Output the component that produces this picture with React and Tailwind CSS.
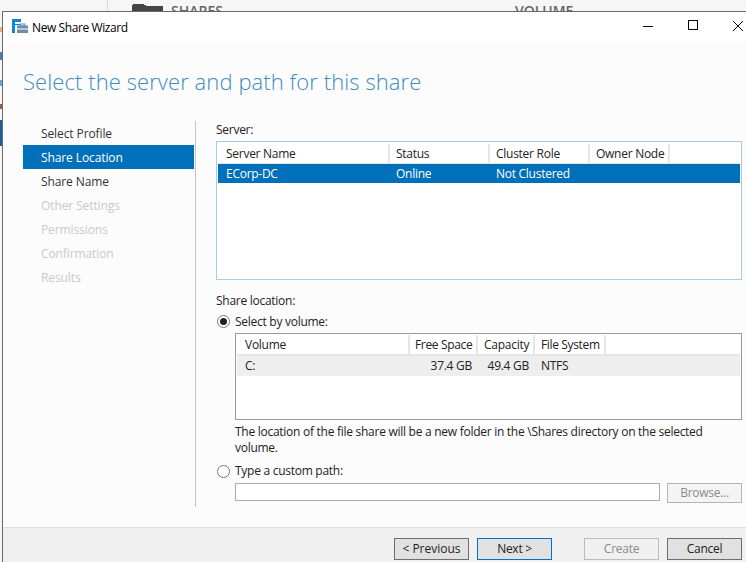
const FONT = "font-['Open_Sans','Noto_Sans',sans-serif]";

function Th({ w, children }) {
  return (
    <div className={`h-full shrink-0 border-r-2 border-[#e6e6e6] flex items-center pl-[8px] whitespace-nowrap ${w}`}>
      {children}
    </div>
  );
}

function NavItem({ children, state }) {
  const cls =
    state === "active"
      ? "bg-[#0070bb] text-white"
      : state === "off"
      ? "text-[#c9c9c9]"
      : "text-[#333333]";
  return <div className={`h-[24px] pl-[18px] pt-px flex items-center tracking-[-0.1px] ${cls}`}>{children}</div>;
}

function Radio({ checked }) {
  return (
    <span className="w-[13px] h-[13px] rounded-full border border-[#777777] bg-white flex items-center justify-center shrink-0">
      {checked && <span className="w-[7px] h-[7px] rounded-full bg-[#222222]" />}
    </span>
  );
}

function Btn({ extra = "", kind, children }) {
  const cls =
    kind === "default"
      ? "border-[#0070c8] bg-[#e1e1e1] text-[#222222]"
      : kind === "off"
      ? "border-[#bcbcbc] bg-[#f0f0f0] text-[#8a8a8a]"
      : "border-[#6e6e6e] bg-[#e1e1e1] text-[#222222]";
  return (
    <div className={`h-[22px] w-[75px] border flex items-center justify-center shrink-0 ${cls} ${extra}`}>{children}</div>
  );
}

export default function App() {
  return (
    <div className={`w-[746px] h-[562px] overflow-hidden bg-[#f6f6f6] text-[12px] leading-[16px] tracking-[-0.27px] text-[#222222] ${FONT}`}>
      <div className="h-[11px] overflow-hidden flex items-start">
        <div className="ml-[107px] w-px h-full bg-[#d8d8d8] shrink-0" />
        <svg className="ml-[24px] mt-[4px] shrink-0" width="32" height="7" viewBox="0 0 32 7">
          <rect x="0" y="1" width="14" height="6" fill="#444" />
          <rect x="1" y="0" width="11" height="2" fill="#444" />
          <rect x="14" y="2" width="17" height="5" fill="#444" />
        </svg>
        <span className="ml-[7px] mt-[3px] text-[14px] font-semibold text-[#666666] tracking-normal">SHARES</span>
        <span className="ml-[292px] mt-[3px] text-[14px] font-semibold text-[#666666] tracking-normal">VOLUME</span>
      </div>
      <div className="flex h-[551px]">
        <div className="w-[2px] shrink-0 flex flex-col">
          <div className="h-[16px] shrink-0" />
          <div className="h-[5px] bg-[#e8b080] shrink-0" />
          <div className="h-[20px] shrink-0" />
          <div className="h-[8px] bg-[#4a78b0] shrink-0" />
          <div className="h-[20px] shrink-0" />
          <div className="h-[6px] bg-[#7aa0d0] shrink-0" />
          <div className="h-[18px] shrink-0" />
          <div className="h-[5px] bg-[#a06040] shrink-0" />
          <div className="h-[11px] shrink-0" />
          <div className="h-[26px] bg-[#1c5e9c] shrink-0" />
        </div>
        <div className="h-full w-[760px] border-l border-t border-[#6b6b6b] bg-[#fcfcfc] flex flex-col shrink-0">
          <div className="h-[30px] bg-white flex items-center shrink-0 relative">
            <svg className="ml-[9px] shrink-0" width="16" height="16" viewBox="0 0 16 16">
              <rect x="0" y="0" width="9" height="3" fill="#0a84e0" />
              <rect x="0" y="0" width="3" height="14" fill="#0a84e0" />
              <rect x="3" y="5" width="6" height="1" fill="#0a84e0" />
              <rect x="5" y="6.5" width="11" height="7.5" fill="#6d8ea8" />
              <rect x="8" y="5" width="5" height="2" fill="none" stroke="#6d8ea8" />
              <rect x="5" y="9.5" width="11" height="1" fill="#ffffff" />
            </svg>
            <span className="ml-[4px] pt-px text-black tracking-[-0.4px]">New Share Wizard</span>
            <svg className="absolute left-[640px] top-[6px]" width="100" height="16" viewBox="0 0 100 16">
              <path d="M0 8.5H10" stroke="#000" />
              <rect x="45.5" y="2.5" width="9" height="9" fill="none" stroke="#000" />
              <path d="M90 3L100 13M100 3L90 13" stroke="#000" />
            </svg>
          </div>
          <div className="h-[79px] pl-[20px] pt-[23px] shrink-0 text-[22px] leading-[32px] text-[#3c8cbe] font-light tracking-[0.08px] whitespace-nowrap">
            Select the server and path for this share
          </div>
          <div className="flex h-[406px] shrink-0">
            <div className="w-[171px] ml-[20px] shrink-0 flex flex-col">
              <NavItem>Select Profile</NavItem>
              <NavItem state="active">Share Location</NavItem>
              <NavItem>Share Name</NavItem>
              <NavItem state="off">Other Settings</NavItem>
              <NavItem state="off">Permissions</NavItem>
              <NavItem state="off">Confirmation</NavItem>
              <NavItem state="off">Results</NavItem>
            </div>
            <div className="w-px bg-[#c4c4c4] ml-px h-[386px] shrink-0" />
            <div className="w-[526px] ml-[20px] shrink-0 flex flex-col">
              <div className="h-[20px] pt-px">Server:</div>
              <div className="h-[139px] w-[526px] border border-[#a6cde6] bg-white p-px shrink-0">
                <div className="h-[19px] pt-px flex items-center border-b border-[#e6e6e6] box-content">
                  <Th w="w-[172px]">Server Name</Th>
                  <Th w="w-[100px]"><span className="-ml-[2px]">Status</span></Th>
                  <Th w="w-[100px]"><span className="-ml-[2px]">Cluster Role</span></Th>
                  <Th w="w-[80px]"><span className="-ml-[2px]">Owner Node</span></Th>
                </div>
                <div className="h-[19px] bg-[#0070bb] text-white flex items-center">
                  <span className="w-[172px] pl-[8px] shrink-0">ECorp-DC</span>
                  <span className="w-[100px] pl-[6px] shrink-0">Online</span>
                  <span className="pl-[6px]">Not Clustered</span>
                </div>
              </div>
              <div className="mt-[12px] h-[16px] pt-px">Share location:</div>
              <div className="mt-[5px] flex items-center gap-[5px] pl-px h-[16px]">
                <Radio checked />
                <span className="pt-px">Select by volume:</span>
              </div>
              <div className="mt-[4px] ml-[19px] w-[507px] h-[87px] border border-[#9a9a9a] bg-white p-px shrink-0">
                <div className="h-[19px] flex items-center border-b-2 border-[#e6e6e6] box-content">
                  <Th w="w-[173px]">Volume</Th>
                  <Th w="w-[68px]"><span className="-ml-[3px] tracking-[-0.35px]">Free Space</span></Th>
                  <Th w="w-[57px]"><span className="-ml-[2px]">Capacity</span></Th>
                  <Th w="w-[71px]"><span className="-ml-[2px] tracking-[-0.35px]">File System</span></Th>
                </div>
                <div className="h-[20px] bg-[#eeeeee] flex items-center">
                  <span className="w-[173px] pl-[8px] shrink-0">C:</span>
                  <span className="w-[68px] pr-[6px] text-right shrink-0">37.4 GB</span>
                  <span className="w-[57px] pr-[6px] text-right shrink-0">49.4 GB</span>
                  <span className="pl-[6px]">NTFS</span>
                </div>
              </div>
              <div className="mt-[4px] ml-[19px] w-[490px]">
                The location of the file share will be a new folder in the \Shares directory on the selected volume.
              </div>
              <div className="mt-[7px] flex items-center gap-[5px] pl-px h-[16px]">
                <Radio />
                <span>Type a custom path:</span>
              </div>
              <div className="mt-[4px] ml-[19px] flex items-start gap-[7px]">
                <div className="w-[425px] h-[18px] border border-[#ababab] bg-white shrink-0" />
                <div className="w-[75px] h-[20px] border border-[#b4b4b4] bg-[#f4f4f4] text-[#8a8a8a] flex items-center justify-center shrink-0">
                  Browse...
                </div>
              </div>
            </div>
          </div>
          <div className="flex-1 border-t border-[#dddddd] bg-[#f0f0f0] pt-[10px] pl-[391px] flex items-start gap-[8px]">
            <Btn extra="tracking-[0px]">&lt; Previous</Btn>
            <Btn kind="default">Next &gt;</Btn>
            <Btn kind="off" extra="ml-[24px]">Create</Btn>
            <Btn>Cancel</Btn>
          </div>
        </div>
      </div>
    </div>
  );
}
